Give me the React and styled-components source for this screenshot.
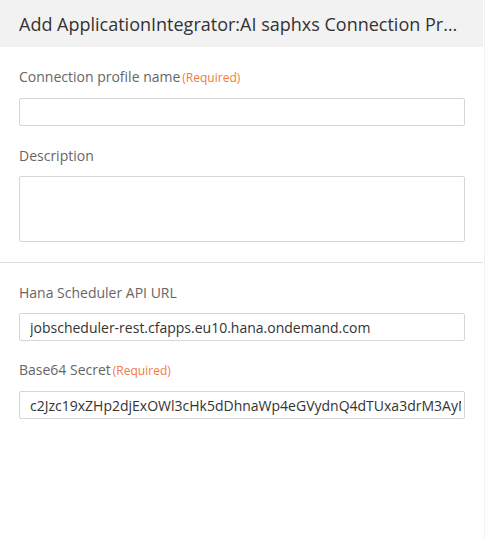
import React from "react";
import styled, { createGlobalStyle } from "styled-components";

const Global = createGlobalStyle`
  html, body { margin: 0; padding: 0; background: #fff; }
  body { font-family: "Open Sans", "Noto Sans", sans-serif; }
  * { box-sizing: border-box; }
`;

const Panel = styled.div`
  width: 485px;
  min-height: 540px;
  border-right: 1px solid #f2f2f2;
  padding-right: 1px;
  background: #fff;
`;

const Header = styled.div`
  height: 47px;
  background: #f2f2f2;
  display: flex;
  align-items: center;
  padding: 0 24px 0 19px;
`;

const Title = styled.h1`
  margin: 0;
  font-size: 18px;
  font-weight: 400;
  color: #333;
  white-space: nowrap;
  overflow: hidden;
  text-overflow: ellipsis;
  min-width: 0;
`;

const Section = styled.section`
  display: flex;
  flex-direction: column;
  gap: ${(p) => p.$gap || 20}px;
  padding: 20px 18px 20px 19px;
  border-bottom: ${(p) => (p.$divider ? "1px solid #e0e0e0" : "none")};
`;

const Field = styled.div`
  display: flex;
  flex-direction: column;
`;

const Label = styled.label`
  font-size: 14px;
  line-height: 20px;
  color: #666;
  margin-bottom: 10px;
`;

const Required = styled.span`
  font-size: 12px;
  color: #f37b44;
  margin-left: 2px;
`;

const Input = styled.input`
  height: 28px;
  width: 100%;
  border: 1px solid #d6d6d6;
  border-radius: 2px;
  padding: 0 3px 0 10px;
  font-family: "Open Sans", "Noto Sans", sans-serif;
  font-size: 14px;
  color: #333;
  background: #fff;
  outline: none;
`;

const TextArea = styled.textarea`
  height: 66px;
  width: 100%;
  border: 1px solid #d6d6d6;
  border-radius: 2px;
  resize: none;
  padding: 4px 10px;
  font-family: "Open Sans", "Noto Sans", sans-serif;
  font-size: 14px;
  color: #333;
  outline: none;
  display: block;
`;

export default function App() {
  return (
    <>
      <Global />
      <Panel>
        <Header>
          <Title>Add ApplicationIntegrator:AI saphxs Connection Profile</Title>
        </Header>
        <Section $divider>
          <Field>
            <Label>
              Connection profile name<Required>(Required)</Required>
            </Label>
            <Input defaultValue="" />
          </Field>
          <Field>
            <Label>Description</Label>
            <TextArea defaultValue="" />
          </Field>
        </Section>
        <Section $gap={19}>
          <Field>
            <Label>Hana Scheduler API URL</Label>
            <Input defaultValue="jobscheduler-rest.cfapps.eu10.hana.ondemand.com" />
          </Field>
          <Field>
            <Label>
              Base64 Secret<Required>(Required)</Required>
            </Label>
            <Input defaultValue="c2Jzc19xZHp2djExOWl3cHk5dDhnaWp4eGVydnQ4dTUxa3drM3AyNmRpYnZ0" />
          </Field>
        </Section>
      </Panel>
    </>
  );
}
